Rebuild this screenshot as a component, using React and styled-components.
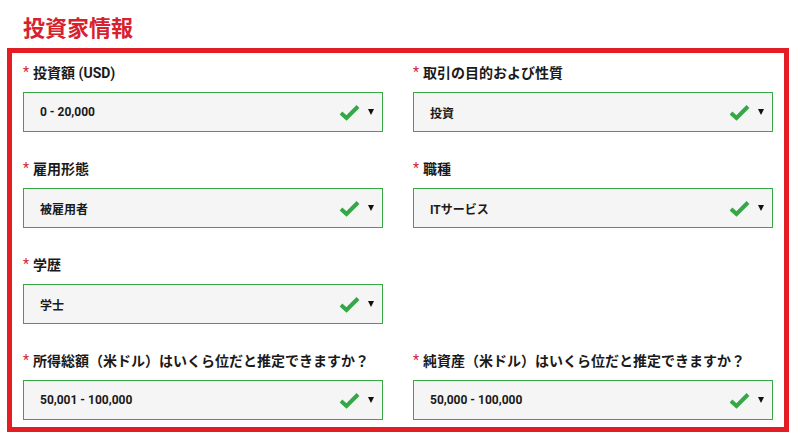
import React from 'react';
import styled, { createGlobalStyle } from 'styled-components';

const GlobalStyle = createGlobalStyle`
  html, body {
    margin: 0;
    padding: 0;
    background: #ffffff;
  }

  body {
    font-family: Roboto, "Noto Sans CJK JP", sans-serif;
    color: #1a1a1a;
  }
`;

const Page = styled.div`
  width: 800px;
  height: 444px;
  overflow: hidden;
`;

const Title = styled.h2`
  margin: 0;
  padding: 14px 0 4px 23px;
  font-size: 22px;
  line-height: 30px;
  font-weight: 700;
  color: #d8212f;
`;

const Box = styled.section`
  margin-left: 7px;
  width: 772px;
  border: 5px solid #e41c24;
  padding: 9px 0 7px;
  box-sizing: content-box;
`;

const Grid = styled.div`
  display: grid;
  grid-template-columns: 360px 360px;
  column-gap: 30px;
  row-gap: 26px;
  padding: 0 11px;
`;

const Field = styled.div`
  grid-column: ${props => props.col || 'auto'};
  display: flex;
  flex-direction: column;
  gap: 10px;
`;

const Label = styled.label`
  display: flex;
  align-items: center;
  height: 20px;
  font-size: 14px;
  font-weight: 700;
  color: #1a1a1a;
  white-space: nowrap;
`;

const Star = styled.span`
  color: #d8212f;
  font-weight: 400;
  margin-right: 4px;
`;

const Select = styled.div`
  display: flex;
  align-items: center;
  height: 40px;
  box-sizing: border-box;
  border: 1px solid #38a845;
  background: #f5f5f5;
  padding: 0 8px 0 16px;
`;

const Value = styled.span`
  flex: 1;
  font-size: 12px;
  font-weight: 700;
  color: #1a1a1a;
`;

const Caret = styled.span`
  width: 0;
  height: 0;
  margin-left: 8px;
  border-left: 3px solid transparent;
  border-right: 3px solid transparent;
  border-top: 6px solid #111111;
`;

function Check() {
  return (
    <svg width="21" height="17" viewBox="0 0 21 17">
      <polyline
        points="2,9 7.5,14 19,2.5"
        fill="none"
        stroke="#33a845"
        strokeWidth="4"
        strokeLinejoin="miter"
      />
    </svg>
  );
}

const fields = [
  { label: '投資額 (USD)', value: '0 - 20,000' },
  { label: '取引の目的および性質', value: '投資' },
  { label: '雇用形態', value: '被雇用者' },
  { label: '職種', value: 'ITサービス' },
  { label: '学歴', value: '学士', col: '1' },
  { label: '所得総額（米ドル）はいくら位だと推定できますか？', value: '50,001 - 100,000', col: '1' },
  { label: '純資産（米ドル）はいくら位だと推定できますか？', value: '50,000 - 100,000' },
];

export default function App() {
  return (
    <Page>
      <GlobalStyle />
      <Title>投資家情報</Title>
      <Box>
        <Grid>
          {fields.map(f => (
            <Field key={f.label} col={f.col}>
              <Label>
                <Star>*</Star>
                {f.label}
              </Label>
              <Select>
                <Value>{f.value}</Value>
                <Check />
                <Caret />
              </Select>
            </Field>
          ))}
        </Grid>
      </Box>
    </Page>
  );
}
